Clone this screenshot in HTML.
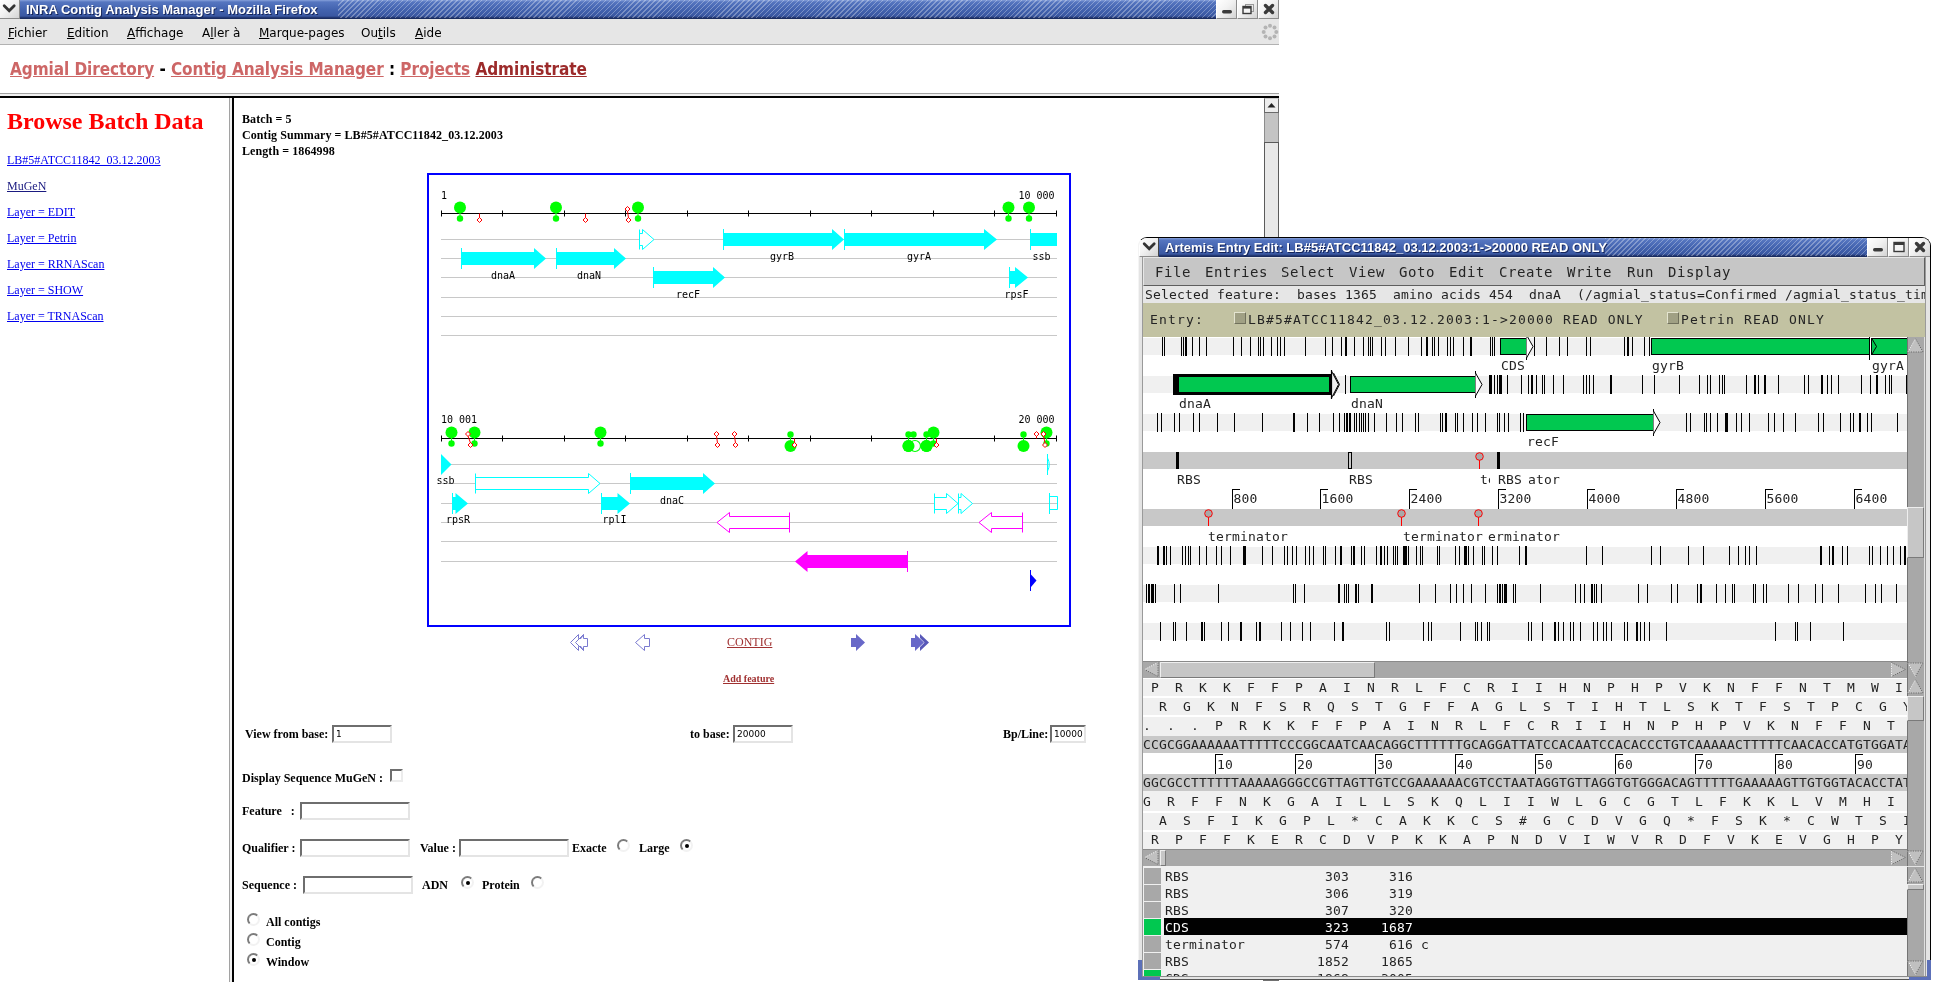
<!DOCTYPE html>
<html><head><meta charset="utf-8"><title>INRA Contig Analysis Manager - Mozilla Firefox</title>
<style>
html,body{margin:0;padding:0;background:#fff;}
body{width:1933px;height:982px;overflow:hidden;position:relative;font-family:"Liberation Sans","DejaVu Sans",sans-serif;}
div,span,a{box-sizing:border-box}
.a{position:absolute;white-space:nowrap}
#ff{position:absolute;left:0;top:0;width:1279px;height:982px;overflow:hidden;background:#fff;}
.tbar{position:absolute;height:19px;background:linear-gradient(#86a0da 0,#5676c0 2px,#4464b0 9px,#3a58a2 16px,#2c4486 17px,#1a2c60 18px);overflow:hidden}
.hatch{position:absolute;top:0;height:18px;right:0;background:repeating-linear-gradient(135deg,rgba(255,255,255,.30) 0,rgba(255,255,255,.30) 1px,rgba(255,255,255,0) 1px,rgba(255,255,255,0) 3.5px);}
.ttext{position:absolute;left:6px;top:2px;font:bold 13px "Liberation Sans","DejaVu Sans",sans-serif;color:#fff;text-shadow:1px 1px 0 #16265a;white-space:nowrap}
.wbtn{position:absolute;height:19px;background:linear-gradient(135deg,#ffffff 0,#f2f2f2 45%,#d4d4d4 100%);border-right:1px solid #8c8c8c;border-bottom:1px solid #8c8c8c;border-left:1px solid #fff}
#menubar{position:absolute;left:0;top:19px;width:1279px;height:26px;background:#e6e6e6;border-bottom:1px solid #b2b2b2;font:12px "DejaVu Sans","Liberation Sans",sans-serif;color:#000}
#menubar span{position:absolute;top:7px;white-space:nowrap}
#hdr{position:absolute;left:0;top:45px;width:1279px;height:48px;background:#fff}
#hdr .t{position:absolute;left:10px;top:14px;font:bold 17px "DejaVu Sans Condensed","DejaVu Sans","Liberation Sans",sans-serif;white-space:nowrap;color:#000;letter-spacing:-0.06px}
#hdr a{color:#cd6666;text-decoration:underline}
#hdr a.v{color:#9c2a2a}
.ser{font-family:"Liberation Serif","DejaVu Serif",serif}
.lnk{position:absolute;left:7px;font:12px "Liberation Serif","DejaVu Serif",serif;color:#0000ee;text-decoration:underline;white-space:nowrap}
.b12{position:absolute;font:bold 12px "Liberation Serif","DejaVu Serif",serif;color:#000;white-space:nowrap}
.inp{position:absolute;height:18px;background:#fff;border:2px solid;border-color:#6e6e6e #e4e4e4 #e4e4e4 #6e6e6e;font:9px "DejaVu Sans","Liberation Sans",sans-serif;padding:2px 0 0 2px;color:#000}
.rad{position:absolute;width:13px;height:13px;border-radius:50%;background:#fff;border:2px solid;border-color:#7c7c7c #f2f2f2 #f2f2f2 #7c7c7c;transform:rotate(0deg)}
.rad.on::after{content:"";position:absolute;left:2.5px;top:2.5px;width:4px;height:4px;border-radius:50%;background:#000}
.mono{font-family:"DejaVu Sans Mono","Liberation Mono",monospace}
</style></head><body><div id="root" style="position:absolute;left:0;top:0;width:1933px;height:982px;overflow:hidden;will-change:transform;opacity:0.999">
<div id="ff">
<div class="wbtn" style="left:0;top:0;width:20px;border-left:0"><svg class="a" style="left:2px;top:3px" width="15" height="12" viewBox="0 0 15 12"><polyline points="2.2,2.8 7.2,7.8 12.2,2.8" fill="none" stroke="#333" stroke-width="2.8" stroke-linecap="round" stroke-linejoin="miter"/></svg></div>
<div class="tbar" style="left:20px;top:0;width:1196px"><div class="hatch" style="left:318px"></div><div class="ttext">INRA Contig Analysis Manager - Mozilla Firefox</div></div>
<div class="wbtn" style="left:1216px;top:0;width:21px"><svg class="a" style="left:0;top:0" width="20" height="18"><rect x="5" y="10" width="10" height="3.4" rx="1.7" fill="#3a3a3a"/></svg></div>
<div class="wbtn" style="left:1237px;top:0;width:21px"><svg class="a" style="left:0;top:0" width="20" height="18"><rect x="7.5" y="4.5" width="8" height="7" fill="none" stroke="#9a9a9a"/><rect x="5" y="6.5" width="8" height="7" fill="#f4f4f4" stroke="#3a3a3a" stroke-width="1.4"/><rect x="5" y="6" width="8" height="2.6" fill="#3a3a3a"/></svg></div>
<div class="wbtn" style="left:1258px;top:0;width:21px"><svg class="a" style="left:0;top:0" width="20" height="18"><path d="M6.5 5.5 L13.5 12.5 M13.5 5.5 L6.5 12.5" stroke="#3a3a3a" stroke-width="3.4" stroke-linecap="round"/></svg></div>
<div id="menubar"><span style="left:8px"><u>F</u>ichier</span><span style="left:67px"><u>E</u>dition</span><span style="left:127px"><u>A</u>ffichage</span><span style="left:202px">A<u>l</u>ler à</span><span style="left:259px"><u>M</u>arque-pages</span><span style="left:361px">Ou<u>t</u>ils</span><span style="left:415px"><u>A</u>ide</span>
<svg class="a" style="left:1260px;top:3px" width="20" height="20" viewBox="0 0 20 20"><circle cx="16.3" cy="10.0" r="2" fill="#b4b4b4"/><circle cx="14.5" cy="14.5" r="2" fill="#b4b4b4"/><circle cx="10.0" cy="16.3" r="2" fill="#b4b4b4"/><circle cx="5.5" cy="14.5" r="2" fill="#b4b4b4"/><circle cx="3.7" cy="10.0" r="2" fill="#b4b4b4"/><circle cx="5.5" cy="5.5" r="2" fill="#b4b4b4"/><circle cx="10.0" cy="3.7" r="2" fill="#b4b4b4"/><circle cx="14.5" cy="5.5" r="2" fill="#b4b4b4"/></svg>
</div>
<div id="hdr"><div class="t"><a>Agmial Directory</a> - <a>Contig Analysis Manager</a> : <a>Projects</a> <a class="v">Administrate</a></div></div>
<div class="a" style="left:0;top:93px;width:1279px;height:1px;background:#a2a2a2"></div>
<div class="a" style="left:0;top:94px;width:1279px;height:2px;background:#f0f0f0"></div>
<div class="a" style="left:0;top:96px;width:1279px;height:2px;background:#000"></div>
<div class="a" style="left:229px;top:98px;width:1px;height:884px;background:#a2a2a2"></div>
<div class="a" style="left:230px;top:98px;width:2px;height:884px;background:#f0f0f0"></div>
<div class="a" style="left:232px;top:97px;width:2px;height:885px;background:#000"></div>
<div class="a ser" style="left:7px;top:108px;font:bold 24px 'Liberation Serif',serif;color:#ff0000;letter-spacing:-0.02px">Browse Batch Data</div>
<a class="lnk" style="top:153px;">LB#5#ATCC11842_03.12.2003</a>
<a class="lnk" style="top:179px;color:#1a1a80;">MuGeN</a>
<a class="lnk" style="top:205px;">Layer = EDIT</a>
<a class="lnk" style="top:231px;">Layer = Petrin</a>
<a class="lnk" style="top:257px;">Layer = RRNAScan</a>
<a class="lnk" style="top:283px;">Layer = SHOW</a>
<a class="lnk" style="top:309px;">Layer = TRNAScan</a>
<div class="b12" style="left:242px;top:112px;letter-spacing:0.08px">Batch = 5</div>
<div class="b12" style="left:242px;top:128px;letter-spacing:0.08px">Contig Summary = LB#5#ATCC11842_03.12.2003</div>
<div class="b12" style="left:242px;top:144px;letter-spacing:0.08px">Length = 1864998</div>
<div class="a" style="left:1264px;top:98px;width:15px;height:882px;background:#c4c4c4;border-left:1px solid #8c8c8c;border-right:1px solid #8c8c8c"></div>
<div class="a" style="left:1263px;top:980px;width:16px;height:1px;background:#707070"></div>
<div class="a" style="left:1264px;top:98px;width:15px;height:15px;background:#ececec;border:1px solid #6a6a6a;border-top-color:#ccc"><svg class="a" style="left:2px;top:3px" width="9" height="6"><path d="M0.5 5.5 L4.5 1 L8.5 5.5 Z" fill="#222"/></svg></div>
<div class="a" style="left:1264px;top:142px;width:15px;height:200px;background:#e8e8e8;border:1px solid #5a5a5a"></div>
<svg class="a" style="left:565px;top:630px" width="380" height="26" viewBox="565 630 380 26"><g fill="#fff" stroke="#7a7ad0" stroke-width="1"><path d="M570.5 642.5 L578.5 634.5 L578.5 638.5 L581 638.5 L583.5 634.5 L583.5 638.5 L587.5 638.5 L587.5 646.5 L583.5 646.5 L583.5 650.5 L581 646.5 L578.5 646.5 L578.5 650.5 Z"/><path d="M575.5 642.5 L583.5 634.5 M575.5 642.5 L583.5 650.5" /><path d="M635.5 642.5 L644.5 634.5 L644.5 638.5 L649.5 638.5 L649.5 646.5 L644.5 646.5 L644.5 650.5 Z"/></g><g fill="#6868c8"><path d="M851 638 L856 638 L856 634 L865 642.5 L856 651 L856 647 L851 647 Z"/><path d="M911 638 L915 638 L915 634 L924 642.5 L915 651 L915 647 L911 647 Z"/><path d="M920 634 L929 642.5 L920 651 L920 647 L924.5 642.5 L920 638 Z" fill="#5858b8"/></g></svg>
<a class="a ser" style="left:727px;top:635px;font:12px 'Liberation Serif',serif;color:#a03030;text-decoration:underline">CONTIG</a>
<a class="a ser" style="left:723px;top:673px;font:bold 10px 'Liberation Serif',serif;color:#a03030;text-decoration:underline">Add feature</a>
<div class="b12" style="left:245px;top:727px">View from base:</div>
<div class="inp" style="left:332px;top:725px;width:60px">1</div>
<div class="b12" style="left:690px;top:727px">to base:</div>
<div class="inp" style="left:733px;top:725px;width:60px">20000</div>
<div class="b12" style="left:1003px;top:727px">Bp/Line:</div>
<div class="inp" style="left:1050px;top:725px;width:36px">10000</div>
<div class="b12" style="left:242px;top:771px">Display Sequence MuGeN :</div>
<div class="a" style="left:390px;top:769px;width:13px;height:13px;background:#fff;border:2px solid;border-color:#6e6e6e #ececec #ececec #6e6e6e"></div>
<div class="b12" style="left:242px;top:804px">Feature&nbsp;&nbsp; :</div>
<div class="inp" style="left:300px;top:802px;width:110px"></div>
<div class="b12" style="left:242px;top:841px">Qualifier :</div>
<div class="inp" style="left:300px;top:839px;width:110px"></div>
<div class="b12" style="left:420px;top:841px">Value :</div>
<div class="inp" style="left:459px;top:839px;width:110px"></div>
<div class="b12" style="left:572px;top:841px">Exacte</div>
<div class="rad" style="left:617px;top:839px"></div>
<div class="b12" style="left:639px;top:841px">Large</div>
<div class="rad on" style="left:680px;top:839px"></div>
<div class="b12" style="left:242px;top:878px">Sequence :</div>
<div class="inp" style="left:303px;top:876px;width:110px"></div>
<div class="b12" style="left:422px;top:878px">ADN</div>
<div class="rad on" style="left:461px;top:876px"></div>
<div class="b12" style="left:482px;top:878px">Protein</div>
<div class="rad" style="left:531px;top:876px"></div>
<div class="rad" style="left:247px;top:913px"></div>
<div class="b12" style="left:266px;top:915px">All contigs</div>
<div class="rad" style="left:247px;top:933px"></div>
<div class="b12" style="left:266px;top:935px">Contig</div>
<div class="rad on" style="left:247px;top:953px"></div>
<div class="b12" style="left:266px;top:955px">Window</div>
<svg class="a" style="left:427px;top:173px" width="644" height="454" viewBox="427 173 644 454" shape-rendering="auto">
<rect x="428" y="174" width="642" height="452" fill="#fff" stroke="#0000ff" stroke-width="2"/>
<path d="M441 239.5 H1057" stroke="#c8c8c8" stroke-width="1"/>
<path d="M441 258.5 H1057" stroke="#c8c8c8" stroke-width="1"/>
<path d="M441 277.5 H1057" stroke="#c8c8c8" stroke-width="1"/>
<path d="M441 297.5 H1057" stroke="#c8c8c8" stroke-width="1"/>
<path d="M441 316.5 H1057" stroke="#c8c8c8" stroke-width="1"/>
<path d="M441 335.5 H1057" stroke="#c8c8c8" stroke-width="1"/>
<path d="M441 464.5 H1057" stroke="#c8c8c8" stroke-width="1"/>
<path d="M441 483.5 H1057" stroke="#c8c8c8" stroke-width="1"/>
<path d="M441 503.5 H1057" stroke="#c8c8c8" stroke-width="1"/>
<path d="M441 522.5 H1057" stroke="#c8c8c8" stroke-width="1"/>
<path d="M441 541.5 H1057" stroke="#c8c8c8" stroke-width="1"/>
<path d="M441 561.5 H1057" stroke="#c8c8c8" stroke-width="1"/>
<path d="M461.0 252.0 L534.0 252.0 L534.0 248.0 L546.0 258.5 L534.0 269.0 L534.0 265.0 L461.0 265.0 Z" fill="#00ffff"/><path d="M461.5 248.0 V269.0" stroke="#00ffff" stroke-width="1"/>
<path d="M556.0 252.0 L614.0 252.0 L614.0 248.0 L626.0 258.5 L614.0 269.0 L614.0 265.0 L556.0 265.0 Z" fill="#00ffff"/><path d="M556.5 248.0 V269.0" stroke="#00ffff" stroke-width="1"/>
<path d="M639.5 233.5 L642.5 233.5 L642.5 229.5 L654.0 239.5 L642.5 249.5 L642.5 245.5 L639.5 245.5 Z" fill="#fff" stroke="#00ffff" stroke-width="1"/><path d="M639.5 229.5 V249.5" stroke="#00ffff" stroke-width="1"/>
<path d="M723.0 233.0 L832.0 233.0 L832.0 229.0 L844.0 239.5 L832.0 250.0 L832.0 246.0 L723.0 246.0 Z" fill="#00ffff"/><path d="M723.5 229.0 V250.0" stroke="#00ffff" stroke-width="1"/>
<path d="M844.0 233.0 L984.0 233.0 L984.0 229.0 L997.0 239.5 L984.0 250.0 L984.0 246.0 L844.0 246.0 Z" fill="#00ffff"/><path d="M844.5 229.0 V250.0" stroke="#00ffff" stroke-width="1"/>
<path d="M1030.0 233.0 L1057.0 233.0 L1057.0 246.0 L1030.0 246.0 Z" fill="#00ffff"/><path d="M1030.5 229.0 V250.0" stroke="#00ffff" stroke-width="1"/>
<path d="M653.0 271.0 L713.0 271.0 L713.0 267.0 L725.0 277.5 L713.0 288.0 L713.0 284.0 L653.0 284.0 Z" fill="#00ffff"/><path d="M653.5 267.0 V288.0" stroke="#00ffff" stroke-width="1"/>
<path d="M1009.0 271.0 L1015.0 271.0 L1015.0 267.0 L1028.0 277.5 L1015.0 288.0 L1015.0 284.0 L1009.0 284.0 Z" fill="#00ffff"/><path d="M1009.5 267.0 V288.0" stroke="#00ffff" stroke-width="1"/>
<path d="M441 454 L451.5 464.5 L441 475 Z" fill="#00ffff"/>
<path d="M475.5 477.5 L588.5 477.5 L588.5 473.5 L600.0 483.5 L588.5 493.5 L588.5 489.5 L475.5 489.5 Z" fill="#fff" stroke="#00ffff" stroke-width="1"/><path d="M475.5 473.5 V493.5" stroke="#00ffff" stroke-width="1"/>
<path d="M630.0 477.0 L703.0 477.0 L703.0 473.0 L715.0 483.5 L703.0 494.0 L703.0 490.0 L630.0 490.0 Z" fill="#00ffff"/><path d="M630.5 473.0 V494.0" stroke="#00ffff" stroke-width="1"/>
<path d="M452.0 497.0 L455.5 497.0 L455.5 493.0 L468.0 503.5 L455.5 514.0 L455.5 510.0 L452.0 510.0 Z" fill="#00ffff"/><path d="M452.5 493.0 V514.0" stroke="#00ffff" stroke-width="1"/>
<path d="M601.0 497.0 L617.5 497.0 L617.5 493.0 L630.0 503.5 L617.5 514.0 L617.5 510.0 L601.0 510.0 Z" fill="#00ffff"/><path d="M601.5 493.0 V514.0" stroke="#00ffff" stroke-width="1"/>
<path d="M934.5 497.5 L946.5 497.5 L946.5 493.5 L958.0 503.5 L946.5 513.5 L946.5 509.5 L934.5 509.5 Z" fill="#fff" stroke="#00ffff" stroke-width="1"/><path d="M934.5 493.5 V513.5" stroke="#00ffff" stroke-width="1"/>
<path d="M958.5 497.5 L961.0 497.5 L961.0 493.5 L972.5 503.5 L961.0 513.5 L961.0 509.5 L958.5 509.5 Z" fill="#fff" stroke="#00ffff" stroke-width="1"/><path d="M958.5 493.5 V513.5" stroke="#00ffff" stroke-width="1"/>
<path d="M1047.5 454 V475 M1047.5 458 Q1051 464.5 1047.5 471" fill="none" stroke="#00ffff"/>
<path d="M1049.5 493 V514 M1049.5 496.5 H1057.5 V509.5 H1049.5" fill="none" stroke="#00ffff"/>
<path d="M789.5 516.5 L729.5 516.5 L729.5 512.5 L717.0 522.5 L729.5 532.5 L729.5 528.5 L789.5 528.5 Z" fill="#fff" stroke="#ff00ff" stroke-width="1"/><path d="M789.5 512.5 V532.5" stroke="#ff00ff" stroke-width="1"/>
<path d="M1022.5 516.5 L991.5 516.5 L991.5 512.5 L979.0 522.5 L991.5 532.5 L991.5 528.5 L1022.5 528.5 Z" fill="#fff" stroke="#ff00ff" stroke-width="1"/><path d="M1022.5 512.5 V532.5" stroke="#ff00ff" stroke-width="1"/>
<path d="M908.0 555.0 L807.5 555.0 L807.5 551.0 L795.0 561.5 L807.5 572.0 L807.5 568.0 L908.0 568.0 Z" fill="#ff00ff"/><path d="M907.5 551.0 V572.0" stroke="#ff00ff" stroke-width="1"/>
<path d="M1030.5 570 V591" stroke="#0000ff"/><path d="M1031 574.5 L1036.5 580.5 L1031 587 Z" fill="#0000ff"/>
<path d="M441 213.5 H1057" stroke="#000" stroke-width="1"/>
<path d="M441.5 210.5 V216.5" stroke="#000"/>
<path d="M502.5 210.5 V216.5" stroke="#000"/>
<path d="M564.5 210.5 V216.5" stroke="#000"/>
<path d="M625.5 210.5 V216.5" stroke="#000"/>
<path d="M687.5 210.5 V216.5" stroke="#000"/>
<path d="M748.5 210.5 V216.5" stroke="#000"/>
<path d="M810.5 210.5 V216.5" stroke="#000"/>
<path d="M871.5 210.5 V216.5" stroke="#000"/>
<path d="M933.5 210.5 V216.5" stroke="#000"/>
<path d="M994.5 210.5 V216.5" stroke="#000"/>
<path d="M1056.5 210.5 V216.5" stroke="#000"/>
<path d="M441 438.5 H1057" stroke="#000" stroke-width="1"/>
<path d="M441.5 435.5 V441.5" stroke="#000"/>
<path d="M502.5 435.5 V441.5" stroke="#000"/>
<path d="M564.5 435.5 V441.5" stroke="#000"/>
<path d="M625.5 435.5 V441.5" stroke="#000"/>
<path d="M687.5 435.5 V441.5" stroke="#000"/>
<path d="M748.5 435.5 V441.5" stroke="#000"/>
<path d="M810.5 435.5 V441.5" stroke="#000"/>
<path d="M871.5 435.5 V441.5" stroke="#000"/>
<path d="M933.5 435.5 V441.5" stroke="#000"/>
<path d="M994.5 435.5 V441.5" stroke="#000"/>
<path d="M1056.5 435.5 V441.5" stroke="#000"/>
<path d="M460.0 207.5 V218.5" stroke="#00ff00"/><circle cx="460.0" cy="207.5" r="6" fill="#00ff00"/><circle cx="460.0" cy="218.5" r="3.2" fill="#00ff00"/>
<path d="M556.0 207.5 V218.5" stroke="#00ff00"/><circle cx="556.0" cy="207.5" r="6" fill="#00ff00"/><circle cx="556.0" cy="218.5" r="3.2" fill="#00ff00"/>
<path d="M638.0 207.5 V218.5" stroke="#00ff00"/><circle cx="638.0" cy="207.5" r="6" fill="#00ff00"/><circle cx="638.0" cy="218.5" r="3.2" fill="#00ff00"/>
<path d="M1008.5 207.5 V218.5" stroke="#00ff00"/><circle cx="1008.5" cy="207.5" r="6" fill="#00ff00"/><circle cx="1008.5" cy="218.5" r="3.2" fill="#00ff00"/>
<path d="M1029.0 207.5 V218.5" stroke="#00ff00"/><circle cx="1029.0" cy="207.5" r="6" fill="#00ff00"/><circle cx="1029.0" cy="218.5" r="3.2" fill="#00ff00"/>
<path d="M479.5 213.5 V218.0" stroke="#ff0000"/><path d="M479.5 217.5 l2.5 2.5 l-2.5 2.5 l-2.5 -2.5 Z" fill="#fff" stroke="#ff0000" stroke-width="1"/>
<path d="M585.5 213.5 V218.0" stroke="#ff0000"/><path d="M585.5 217.5 l2.5 2.5 l-2.5 2.5 l-2.5 -2.5 Z" fill="#fff" stroke="#ff0000" stroke-width="1"/>
<path d="M627.5 211.0 L628.5 218.0" stroke="#ff0000"/><path d="M627.5 206.5 l2.5 2.5 l-2.5 2.5 l-2.5 -2.5 Z" fill="#fff" stroke="#ff0000" stroke-width="1"/><path d="M628.5 217.5 l2.5 2.5 l-2.5 2.5 l-2.5 -2.5 Z" fill="#fff" stroke="#ff0000" stroke-width="1"/>
<path d="M451.5 432.5 V443.5" stroke="#00ff00"/><circle cx="451.5" cy="432.5" r="6" fill="#00ff00"/><circle cx="451.5" cy="443.5" r="3.2" fill="#00ff00"/>
<path d="M474.5 432.5 V443.5" stroke="#00ff00"/><circle cx="474.5" cy="432.5" r="6" fill="#00ff00"/><circle cx="474.5" cy="443.5" r="3.2" fill="#00ff00"/>
<path d="M600.5 432.5 V443.5" stroke="#00ff00"/><circle cx="600.5" cy="432.5" r="6" fill="#00ff00"/><circle cx="600.5" cy="443.5" r="3.2" fill="#00ff00"/>
<path d="M468.0 436.0 L470.5 443.0" stroke="#ff0000"/><path d="M468.0 431.5 l2.5 2.5 l-2.5 2.5 l-2.5 -2.5 Z" fill="#fff" stroke="#ff0000" stroke-width="1"/><path d="M470.5 442.5 l2.5 2.5 l-2.5 2.5 l-2.5 -2.5 Z" fill="#fff" stroke="#ff0000" stroke-width="1"/>
<path d="M716.5 436.0 L717.5 443.0" stroke="#ff0000"/><path d="M716.5 431.5 l2.5 2.5 l-2.5 2.5 l-2.5 -2.5 Z" fill="#fff" stroke="#ff0000" stroke-width="1"/><path d="M717.5 442.5 l2.5 2.5 l-2.5 2.5 l-2.5 -2.5 Z" fill="#fff" stroke="#ff0000" stroke-width="1"/>
<path d="M734.5 436.0 L735.5 443.0" stroke="#ff0000"/><path d="M734.5 431.5 l2.5 2.5 l-2.5 2.5 l-2.5 -2.5 Z" fill="#fff" stroke="#ff0000" stroke-width="1"/><path d="M735.5 442.5 l2.5 2.5 l-2.5 2.5 l-2.5 -2.5 Z" fill="#fff" stroke="#ff0000" stroke-width="1"/>
<path d="M790.5 434.5 V445.5" stroke="#00ff00"/><circle cx="790.5" cy="446.0" r="6" fill="#00ff00"/><circle cx="790.5" cy="434.5" r="3.2" fill="#00ff00"/>
<path d="M794.5 438.5 V443.0" stroke="#ff0000"/><path d="M794.5 442.5 l2.5 2.5 l-2.5 2.5 l-2.5 -2.5 Z" fill="#fff" stroke="#ff0000" stroke-width="1"/>
<path d="M908.5 434.5 V445.5" stroke="#00ff00"/><circle cx="908.5" cy="446.0" r="6" fill="#00ff00"/><circle cx="908.5" cy="434.5" r="3.2" fill="#00ff00"/>
<circle cx="913.5" cy="434.5" r="3.2" fill="#00ff00"/>
<circle cx="915" cy="446" r="5.5" fill="#fff" stroke="#00ff00" stroke-width="1.2"/>
<circle cx="908.5" cy="446" r="6" fill="#00ff00"/>
<path d="M926.5 434.5 V445.5" stroke="#00ff00"/><circle cx="926.5" cy="446.0" r="6" fill="#00ff00"/><circle cx="926.5" cy="434.5" r="3.2" fill="#00ff00"/>
<path d="M933.5 432.5 V443.5" stroke="#00ff00"/><circle cx="933.5" cy="432.5" r="6" fill="#00ff00"/><circle cx="933.5" cy="443.5" r="3.2" fill="#00ff00"/>
<circle cx="926.5" cy="446" r="6" fill="#00ff00"/>
<path d="M936.5 438.5 V443.0" stroke="#ff0000"/><path d="M936.5 442.5 l2.5 2.5 l-2.5 2.5 l-2.5 -2.5 Z" fill="#fff" stroke="#ff0000" stroke-width="1"/>
<path d="M1023.5 434.5 V445.5" stroke="#00ff00"/><circle cx="1023.5" cy="446.0" r="6" fill="#00ff00"/><circle cx="1023.5" cy="434.5" r="3.2" fill="#00ff00"/>
<path d="M1046.5 432.5 V443.5" stroke="#00ff00"/><circle cx="1046.5" cy="432.5" r="6" fill="#00ff00"/><circle cx="1046.5" cy="443.5" r="3.2" fill="#00ff00"/>
<path d="M1036.5 436.0 V438.5" stroke="#ff0000"/><path d="M1036.5 431.5 l2.5 2.5 l-2.5 2.5 l-2.5 -2.5 Z" fill="#fff" stroke="#ff0000" stroke-width="1"/>
<path d="M1043.5 436.0 L1045.0 443.0" stroke="#ff0000"/><path d="M1043.5 431.5 l2.5 2.5 l-2.5 2.5 l-2.5 -2.5 Z" fill="#fff" stroke="#ff0000" stroke-width="1"/><path d="M1045.0 442.5 l2.5 2.5 l-2.5 2.5 l-2.5 -2.5 Z" fill="#fff" stroke="#ff0000" stroke-width="1"/>
<g font-family="'DejaVu Sans Mono','Liberation Mono',monospace" font-size="10" fill="#000">
<text x="441.0" y="199.0">1</text>
<text x="1018.5" y="199.0">10 000</text>
<text x="441.0" y="423.0">10 001</text>
<text x="1018.5" y="423.0">20 000</text>
<text x="491.0" y="279.0">dnaA</text>
<text x="577.0" y="279.0">dnaN</text>
<text x="770.0" y="260.0">gyrB</text>
<text x="907.0" y="260.0">gyrA</text>
<text x="1032.5" y="260.0">ssb</text>
<text x="676.0" y="298.0">recF</text>
<text x="1004.5" y="298.0">rpsF</text>
<text x="436.5" y="484.0">ssb</text>
<text x="446.0" y="523.0">rpsR</text>
<text x="602.5" y="523.0">rplI</text>
<text x="660.0" y="504.0">dnaC</text>
</g>
</svg>
</div>
<div style="color:#242424">
<div class="a" style="left:1138px;top:237px;width:793px;height:743px;background:#e4e4e4;border-radius:9px 9px 0 0;border:1px solid #000;border-left-color:#f4f4f4;border-bottom-color:#555;overflow:hidden"></div>
<div class="wbtn" style="left:1139px;top:238px;width:20px;border-radius:8px 0 0 0;border-right-color:#444"><svg class="a" style="left:2px;top:3px" width="15" height="12" viewBox="0 0 15 12"><polyline points="2.2,2.8 7.2,7.8 12.2,2.8" fill="none" stroke="#333" stroke-width="2.8" stroke-linecap="round"/></svg></div>
<div class="tbar" style="left:1159px;top:238px;width:708px"><div class="hatch" style="left:446px"></div><div class="ttext">Artemis Entry Edit: LB#5#ATCC11842_03.12.2003:1-&gt;20000 READ ONLY</div></div>
<div class="wbtn" style="left:1867px;top:238px;width:21px"><svg class="a" style="left:0;top:0" width="20" height="18"><rect x="5" y="10" width="10" height="3.4" rx="1.7" fill="#3a3a3a"/></svg></div>
<div class="wbtn" style="left:1888px;top:238px;width:21px"><svg class="a" style="left:0;top:0" width="20" height="18"><rect x="5" y="4.5" width="10" height="9" fill="#f4f4f4" stroke="#3a3a3a" stroke-width="1.4"/><rect x="5" y="4" width="10" height="3" fill="#3a3a3a"/></svg></div>
<div class="wbtn" style="left:1909px;top:238px;width:21px;border-radius:0 8px 0 0;border-right:0"><svg class="a" style="left:0;top:0" width="20" height="18"><path d="M6.5 5.5 L13.5 12.5 M13.5 5.5 L6.5 12.5" stroke="#3a3a3a" stroke-width="3.4" stroke-linecap="round"/></svg></div>
<div class="a" style="left:1142px;top:257px;width:1px;height:720px;background:#9a9a9a"></div>
<div class="a" style="left:1925px;top:257px;width:1px;height:720px;background:#9a9a9a"></div>
<div class="a" style="left:1143px;top:257px;width:782px;height:29px;background:#c6c6c6;border-top:1px solid #e6e6e6;border-left:1px solid #e6e6e6;border-bottom:1px solid #5e5e5e;border-right:1px solid #5e5e5e"></div>
<div class="a mono" style="left:1155px;top:264px;font-size:14px;letter-spacing:0.57px;line-height:17px">File</div>
<div class="a mono" style="left:1205px;top:264px;font-size:14px;letter-spacing:0.57px;line-height:17px">Entries</div>
<div class="a mono" style="left:1281px;top:264px;font-size:14px;letter-spacing:0.57px;line-height:17px">Select</div>
<div class="a mono" style="left:1349px;top:264px;font-size:14px;letter-spacing:0.57px;line-height:17px">View</div>
<div class="a mono" style="left:1399px;top:264px;font-size:14px;letter-spacing:0.57px;line-height:17px">Goto</div>
<div class="a mono" style="left:1449px;top:264px;font-size:14px;letter-spacing:0.57px;line-height:17px">Edit</div>
<div class="a mono" style="left:1499px;top:264px;font-size:14px;letter-spacing:0.57px;line-height:17px">Create</div>
<div class="a mono" style="left:1567px;top:264px;font-size:14px;letter-spacing:0.57px;line-height:17px">Write</div>
<div class="a mono" style="left:1627px;top:264px;font-size:14px;letter-spacing:0.57px;line-height:17px">Run</div>
<div class="a mono" style="left:1668px;top:264px;font-size:14px;letter-spacing:0.57px;line-height:17px">Display</div>
<div class="a mono" style="left:1143px;top:286px;width:782px;height:17px;background:#e6e6e6;font-size:13px;letter-spacing:0.173px;line-height:18px;padding-left:2px;white-space:pre;overflow:hidden">Selected feature:  bases 1365  amino acids 454  dnaA  (/agmial_status=Confirmed /agmial_status_time=2004</div>
<div class="a" style="left:1143px;top:303px;width:782px;height:34px;background:#c2c2a2"></div>
<div class="a mono" style="left:1150px;top:311px;font-size:13px;letter-spacing:1.17px;line-height:17px">Entry:</div>
<div class="a" style="left:1234px;top:312px;width:12px;height:12px;background:#a0a084;border:1px solid;border-color:#e4e4d0 #70705c #70705c #e4e4d0"></div>
<div class="a mono" style="left:1248px;top:311px;font-size:13px;letter-spacing:1.17px;line-height:17px">LB#5#ATCC11842_03.12.2003:1-&gt;20000 READ ONLY</div>
<div class="a" style="left:1667px;top:312px;width:12px;height:12px;background:#a0a084;border:1px solid;border-color:#e4e4d0 #70705c #70705c #e4e4d0"></div>
<div class="a mono" style="left:1681px;top:311px;font-size:13px;letter-spacing:1.17px;line-height:17px">Petrin READ ONLY</div>
<svg class="a" style="left:1143px;top:337px" width="764" height="324" viewBox="1143 337 764 324" shape-rendering="crispEdges"><rect x="1143" y="337" width="764" height="324" fill="#fff"/><rect x="1143" y="338" width="764" height="17" fill="#f0f0f0"/><rect x="1143" y="376" width="764" height="17" fill="#f0f0f0"/><rect x="1143" y="414" width="764" height="17" fill="#f0f0f0"/><rect x="1143" y="547" width="764" height="17" fill="#f0f0f0"/><rect x="1143" y="585" width="764" height="17" fill="#f0f0f0"/><rect x="1143" y="623" width="764" height="17" fill="#f0f0f0"/><rect x="1143" y="452" width="764" height="17" fill="#c8c8c8"/><rect x="1143" y="509" width="764" height="17" fill="#c8c8c8"/><g fill="#000"><rect x="1162" y="337" width="1" height="19"/><rect x="1164" y="337" width="1" height="19"/><rect x="1181" y="337" width="1" height="19"/><rect x="1183" y="337" width="1" height="19"/><rect x="1185" y="337" width="2" height="19"/><rect x="1192" y="337" width="1" height="19"/><rect x="1199" y="337" width="1" height="19"/><rect x="1206" y="337" width="1" height="19"/><rect x="1233" y="337" width="1" height="19"/><rect x="1241" y="337" width="1" height="19"/><rect x="1250" y="337" width="1" height="19"/><rect x="1258" y="337" width="1" height="19"/><rect x="1260" y="337" width="1" height="19"/><rect x="1263" y="337" width="1" height="19"/><rect x="1271" y="337" width="1" height="19"/><rect x="1277" y="337" width="1" height="19"/><rect x="1280" y="337" width="1" height="19"/><rect x="1284" y="337" width="1" height="19"/><rect x="1305" y="337" width="1" height="19"/><rect x="1325" y="337" width="1" height="19"/><rect x="1332" y="337" width="1" height="19"/><rect x="1341" y="337" width="1" height="19"/><rect x="1345" y="337" width="2" height="19"/><rect x="1354" y="337" width="1" height="19"/><rect x="1363" y="337" width="1" height="19"/><rect x="1368" y="337" width="1" height="19"/><rect x="1370" y="337" width="1" height="19"/><rect x="1372" y="337" width="1" height="19"/><rect x="1381" y="337" width="1" height="19"/><rect x="1385" y="337" width="1" height="19"/><rect x="1395" y="337" width="1" height="19"/><rect x="1408" y="337" width="1" height="19"/><rect x="1421" y="337" width="1" height="19"/><rect x="1426" y="337" width="2" height="19"/><rect x="1432" y="337" width="1" height="19"/><rect x="1434" y="337" width="1" height="19"/><rect x="1438" y="337" width="1" height="19"/><rect x="1447" y="337" width="1" height="19"/><rect x="1450" y="337" width="1" height="19"/><rect x="1453" y="337" width="1" height="19"/><rect x="1463" y="337" width="1" height="19"/><rect x="1470" y="337" width="2" height="19"/><rect x="1490" y="337" width="1" height="19"/><rect x="1492" y="337" width="1" height="19"/><rect x="1494" y="337" width="1" height="19"/><rect x="1534" y="337" width="1" height="19"/><rect x="1546" y="337" width="1" height="19"/><rect x="1559" y="337" width="1" height="19"/><rect x="1567" y="337" width="1" height="19"/><rect x="1586" y="337" width="1" height="19"/><rect x="1590" y="337" width="1" height="19"/><rect x="1624" y="337" width="1" height="19"/><rect x="1627" y="337" width="2" height="19"/><rect x="1632" y="337" width="1" height="19"/><rect x="1644" y="337" width="1" height="19"/><rect x="1649" y="337" width="1" height="19"/><rect x="1345" y="375" width="1" height="19"/><rect x="1489" y="375" width="3" height="19"/><rect x="1494" y="375" width="1" height="19"/><rect x="1497" y="375" width="1" height="19"/><rect x="1499" y="375" width="3" height="19"/><rect x="1507" y="375" width="1" height="19"/><rect x="1521" y="375" width="1" height="19"/><rect x="1528" y="375" width="1" height="19"/><rect x="1531" y="375" width="1" height="19"/><rect x="1532" y="375" width="1" height="19"/><rect x="1536" y="375" width="1" height="19"/><rect x="1542" y="375" width="1" height="19"/><rect x="1544" y="375" width="1" height="19"/><rect x="1553" y="375" width="1" height="19"/><rect x="1563" y="375" width="1" height="19"/><rect x="1583" y="375" width="1" height="19"/><rect x="1586" y="375" width="1" height="19"/><rect x="1589" y="375" width="1" height="19"/><rect x="1593" y="375" width="1" height="19"/><rect x="1610" y="375" width="2" height="19"/><rect x="1642" y="375" width="1" height="19"/><rect x="1654" y="375" width="1" height="19"/><rect x="1679" y="375" width="1" height="19"/><rect x="1699" y="375" width="1" height="19"/><rect x="1707" y="375" width="1" height="19"/><rect x="1710" y="375" width="1" height="19"/><rect x="1719" y="375" width="1" height="19"/><rect x="1722" y="375" width="1" height="19"/><rect x="1724" y="375" width="1" height="19"/><rect x="1746" y="375" width="1" height="19"/><rect x="1754" y="375" width="2" height="19"/><rect x="1758" y="375" width="1" height="19"/><rect x="1764" y="375" width="2" height="19"/><rect x="1778" y="375" width="1" height="19"/><rect x="1804" y="375" width="1" height="19"/><rect x="1808" y="375" width="1" height="19"/><rect x="1821" y="375" width="2" height="19"/><rect x="1827" y="375" width="1" height="19"/><rect x="1831" y="375" width="1" height="19"/><rect x="1838" y="375" width="1" height="19"/><rect x="1861" y="375" width="1" height="19"/><rect x="1870" y="375" width="1" height="19"/><rect x="1876" y="375" width="2" height="19"/><rect x="1885" y="375" width="1" height="19"/><rect x="1889" y="375" width="1" height="19"/><rect x="1891" y="375" width="1" height="19"/><rect x="1906" y="375" width="2" height="19"/><rect x="1157" y="413" width="1" height="19"/><rect x="1161" y="413" width="1" height="19"/><rect x="1174" y="413" width="1" height="19"/><rect x="1179" y="413" width="1" height="19"/><rect x="1193" y="413" width="1" height="19"/><rect x="1199" y="413" width="1" height="19"/><rect x="1217" y="413" width="1" height="19"/><rect x="1234" y="413" width="1" height="19"/><rect x="1262" y="413" width="1" height="19"/><rect x="1293" y="413" width="2" height="19"/><rect x="1307" y="413" width="1" height="19"/><rect x="1319" y="413" width="1" height="19"/><rect x="1333" y="413" width="1" height="19"/><rect x="1339" y="413" width="1" height="19"/><rect x="1344" y="413" width="1" height="19"/><rect x="1346" y="413" width="1" height="19"/><rect x="1347" y="413" width="1" height="19"/><rect x="1349" y="413" width="1" height="19"/><rect x="1350" y="413" width="1" height="19"/><rect x="1354" y="413" width="1" height="19"/><rect x="1356" y="413" width="1" height="19"/><rect x="1359" y="413" width="1" height="19"/><rect x="1361" y="413" width="1" height="19"/><rect x="1363" y="413" width="1" height="19"/><rect x="1365" y="413" width="1" height="19"/><rect x="1368" y="413" width="1" height="19"/><rect x="1374" y="413" width="1" height="19"/><rect x="1386" y="413" width="1" height="19"/><rect x="1396" y="413" width="1" height="19"/><rect x="1402" y="413" width="1" height="19"/><rect x="1415" y="413" width="1" height="19"/><rect x="1418" y="413" width="1" height="19"/><rect x="1440" y="413" width="1" height="19"/><rect x="1442" y="413" width="1" height="19"/><rect x="1445" y="413" width="2" height="19"/><rect x="1455" y="413" width="1" height="19"/><rect x="1457" y="413" width="1" height="19"/><rect x="1463" y="413" width="1" height="19"/><rect x="1472" y="413" width="1" height="19"/><rect x="1477" y="413" width="1" height="19"/><rect x="1485" y="413" width="1" height="19"/><rect x="1497" y="413" width="1" height="19"/><rect x="1499" y="413" width="1" height="19"/><rect x="1504" y="413" width="1" height="19"/><rect x="1508" y="413" width="1" height="19"/><rect x="1520" y="413" width="1" height="19"/><rect x="1523" y="413" width="1" height="19"/><rect x="1686" y="413" width="1" height="19"/><rect x="1690" y="413" width="1" height="19"/><rect x="1704" y="413" width="1" height="19"/><rect x="1706" y="413" width="1" height="19"/><rect x="1710" y="413" width="1" height="19"/><rect x="1717" y="413" width="1" height="19"/><rect x="1725" y="413" width="3" height="19"/><rect x="1736" y="413" width="1" height="19"/><rect x="1741" y="413" width="1" height="19"/><rect x="1749" y="413" width="1" height="19"/><rect x="1768" y="413" width="1" height="19"/><rect x="1774" y="413" width="1" height="19"/><rect x="1783" y="413" width="1" height="19"/><rect x="1795" y="413" width="1" height="19"/><rect x="1818" y="413" width="1" height="19"/><rect x="1823" y="413" width="1" height="19"/><rect x="1840" y="413" width="1" height="19"/><rect x="1850" y="413" width="1" height="19"/><rect x="1853" y="413" width="1" height="19"/><rect x="1859" y="413" width="2" height="19"/><rect x="1867" y="413" width="1" height="19"/><rect x="1871" y="413" width="1" height="19"/><rect x="1897" y="413" width="1" height="19"/><rect x="1157" y="546" width="2" height="19"/><rect x="1163" y="546" width="2" height="19"/><rect x="1166" y="546" width="1" height="19"/><rect x="1170" y="546" width="1" height="19"/><rect x="1182" y="546" width="1" height="19"/><rect x="1185" y="546" width="1" height="19"/><rect x="1188" y="546" width="1" height="19"/><rect x="1190" y="546" width="1" height="19"/><rect x="1199" y="546" width="1" height="19"/><rect x="1206" y="546" width="1" height="19"/><rect x="1216" y="546" width="1" height="19"/><rect x="1221" y="546" width="1" height="19"/><rect x="1230" y="546" width="1" height="19"/><rect x="1243" y="546" width="3" height="19"/><rect x="1262" y="546" width="1" height="19"/><rect x="1272" y="546" width="1" height="19"/><rect x="1284" y="546" width="1" height="19"/><rect x="1287" y="546" width="1" height="19"/><rect x="1292" y="546" width="1" height="19"/><rect x="1296" y="546" width="1" height="19"/><rect x="1305" y="546" width="1" height="19"/><rect x="1309" y="546" width="1" height="19"/><rect x="1313" y="546" width="1" height="19"/><rect x="1323" y="546" width="1" height="19"/><rect x="1325" y="546" width="1" height="19"/><rect x="1335" y="546" width="1" height="19"/><rect x="1340" y="546" width="2" height="19"/><rect x="1351" y="546" width="1" height="19"/><rect x="1353" y="546" width="2" height="19"/><rect x="1361" y="546" width="1" height="19"/><rect x="1364" y="546" width="1" height="19"/><rect x="1376" y="546" width="1" height="19"/><rect x="1380" y="546" width="2" height="19"/><rect x="1384" y="546" width="1" height="19"/><rect x="1387" y="546" width="1" height="19"/><rect x="1393" y="546" width="1" height="19"/><rect x="1395" y="546" width="1" height="19"/><rect x="1397" y="546" width="1" height="19"/><rect x="1403" y="546" width="4" height="19"/><rect x="1408" y="546" width="1" height="19"/><rect x="1416" y="546" width="1" height="19"/><rect x="1420" y="546" width="1" height="19"/><rect x="1422" y="546" width="1" height="19"/><rect x="1437" y="546" width="1" height="19"/><rect x="1439" y="546" width="1" height="19"/><rect x="1455" y="546" width="1" height="19"/><rect x="1459" y="546" width="1" height="19"/><rect x="1464" y="546" width="3" height="19"/><rect x="1468" y="546" width="1" height="19"/><rect x="1473" y="546" width="1" height="19"/><rect x="1482" y="546" width="1" height="19"/><rect x="1484" y="546" width="1" height="19"/><rect x="1492" y="546" width="1" height="19"/><rect x="1497" y="546" width="1" height="19"/><rect x="1519" y="546" width="1" height="19"/><rect x="1525" y="546" width="2" height="19"/><rect x="1586" y="546" width="1" height="19"/><rect x="1602" y="546" width="1" height="19"/><rect x="1651" y="546" width="1" height="19"/><rect x="1660" y="546" width="1" height="19"/><rect x="1688" y="546" width="1" height="19"/><rect x="1703" y="546" width="1" height="19"/><rect x="1729" y="546" width="1" height="19"/><rect x="1738" y="546" width="1" height="19"/><rect x="1745" y="546" width="1" height="19"/><rect x="1749" y="546" width="1" height="19"/><rect x="1756" y="546" width="1" height="19"/><rect x="1820" y="546" width="2" height="19"/><rect x="1829" y="546" width="1" height="19"/><rect x="1832" y="546" width="2" height="19"/><rect x="1842" y="546" width="1" height="19"/><rect x="1847" y="546" width="1" height="19"/><rect x="1869" y="546" width="1" height="19"/><rect x="1872" y="546" width="1" height="19"/><rect x="1880" y="546" width="1" height="19"/><rect x="1887" y="546" width="1" height="19"/><rect x="1893" y="546" width="1" height="19"/><rect x="1900" y="546" width="1" height="19"/><rect x="1904" y="546" width="2" height="19"/><rect x="1146" y="584" width="1" height="19"/><rect x="1148" y="584" width="1" height="19"/><rect x="1149" y="584" width="1" height="19"/><rect x="1151" y="584" width="1" height="19"/><rect x="1152" y="584" width="1" height="19"/><rect x="1153" y="584" width="1" height="19"/><rect x="1155" y="584" width="1" height="19"/><rect x="1174" y="584" width="1" height="19"/><rect x="1180" y="584" width="1" height="19"/><rect x="1218" y="584" width="1" height="19"/><rect x="1293" y="584" width="1" height="19"/><rect x="1295" y="584" width="1" height="19"/><rect x="1304" y="584" width="1" height="19"/><rect x="1338" y="584" width="2" height="19"/><rect x="1344" y="584" width="1" height="19"/><rect x="1346" y="584" width="1" height="19"/><rect x="1348" y="584" width="1" height="19"/><rect x="1355" y="584" width="2" height="19"/><rect x="1358" y="584" width="1" height="19"/><rect x="1371" y="584" width="2" height="19"/><rect x="1419" y="584" width="1" height="19"/><rect x="1435" y="584" width="1" height="19"/><rect x="1450" y="584" width="1" height="19"/><rect x="1456" y="584" width="1" height="19"/><rect x="1463" y="584" width="1" height="19"/><rect x="1471" y="584" width="1" height="19"/><rect x="1485" y="584" width="1" height="19"/><rect x="1497" y="584" width="1" height="19"/><rect x="1499" y="584" width="2" height="19"/><rect x="1502" y="584" width="1" height="19"/><rect x="1504" y="584" width="3" height="19"/><rect x="1513" y="584" width="1" height="19"/><rect x="1515" y="584" width="1" height="19"/><rect x="1540" y="584" width="1" height="19"/><rect x="1575" y="584" width="1" height="19"/><rect x="1580" y="584" width="1" height="19"/><rect x="1584" y="584" width="1" height="19"/><rect x="1591" y="584" width="2" height="19"/><rect x="1594" y="584" width="1" height="19"/><rect x="1596" y="584" width="1" height="19"/><rect x="1601" y="584" width="1" height="19"/><rect x="1638" y="584" width="1" height="19"/><rect x="1647" y="584" width="1" height="19"/><rect x="1671" y="584" width="1" height="19"/><rect x="1677" y="584" width="1" height="19"/><rect x="1697" y="584" width="1" height="19"/><rect x="1700" y="584" width="2" height="19"/><rect x="1716" y="584" width="1" height="19"/><rect x="1725" y="584" width="1" height="19"/><rect x="1732" y="584" width="1" height="19"/><rect x="1734" y="584" width="1" height="19"/><rect x="1753" y="584" width="1" height="19"/><rect x="1755" y="584" width="1" height="19"/><rect x="1763" y="584" width="1" height="19"/><rect x="1766" y="584" width="1" height="19"/><rect x="1788" y="584" width="1" height="19"/><rect x="1798" y="584" width="1" height="19"/><rect x="1815" y="584" width="1" height="19"/><rect x="1822" y="584" width="1" height="19"/><rect x="1838" y="584" width="1" height="19"/><rect x="1865" y="584" width="1" height="19"/><rect x="1875" y="584" width="1" height="19"/><rect x="1881" y="584" width="1" height="19"/><rect x="1896" y="584" width="1" height="19"/><rect x="1160" y="622" width="1" height="19"/><rect x="1173" y="622" width="1" height="19"/><rect x="1175" y="622" width="1" height="19"/><rect x="1186" y="622" width="1" height="19"/><rect x="1201" y="622" width="2" height="19"/><rect x="1204" y="622" width="1" height="19"/><rect x="1221" y="622" width="1" height="19"/><rect x="1228" y="622" width="1" height="19"/><rect x="1240" y="622" width="2" height="19"/><rect x="1256" y="622" width="1" height="19"/><rect x="1259" y="622" width="2" height="19"/><rect x="1281" y="622" width="1" height="19"/><rect x="1290" y="622" width="1" height="19"/><rect x="1302" y="622" width="1" height="19"/><rect x="1310" y="622" width="1" height="19"/><rect x="1334" y="622" width="1" height="19"/><rect x="1342" y="622" width="2" height="19"/><rect x="1386" y="622" width="1" height="19"/><rect x="1389" y="622" width="1" height="19"/><rect x="1423" y="622" width="1" height="19"/><rect x="1428" y="622" width="1" height="19"/><rect x="1431" y="622" width="1" height="19"/><rect x="1460" y="622" width="1" height="19"/><rect x="1475" y="622" width="1" height="19"/><rect x="1477" y="622" width="1" height="19"/><rect x="1481" y="622" width="1" height="19"/><rect x="1487" y="622" width="1" height="19"/><rect x="1489" y="622" width="1" height="19"/><rect x="1528" y="622" width="1" height="19"/><rect x="1531" y="622" width="1" height="19"/><rect x="1542" y="622" width="1" height="19"/><rect x="1554" y="622" width="2" height="19"/><rect x="1558" y="622" width="1" height="19"/><rect x="1563" y="622" width="1" height="19"/><rect x="1570" y="622" width="1" height="19"/><rect x="1573" y="622" width="1" height="19"/><rect x="1580" y="622" width="1" height="19"/><rect x="1593" y="622" width="1" height="19"/><rect x="1597" y="622" width="1" height="19"/><rect x="1603" y="622" width="1" height="19"/><rect x="1606" y="622" width="1" height="19"/><rect x="1611" y="622" width="1" height="19"/><rect x="1624" y="622" width="1" height="19"/><rect x="1627" y="622" width="1" height="19"/><rect x="1636" y="622" width="2" height="19"/><rect x="1640" y="622" width="1" height="19"/><rect x="1644" y="622" width="1" height="19"/><rect x="1649" y="622" width="1" height="19"/><rect x="1666" y="622" width="1" height="19"/><rect x="1775" y="622" width="1" height="19"/><rect x="1795" y="622" width="1" height="19"/><rect x="1797" y="622" width="1" height="19"/><rect x="1810" y="622" width="1" height="19"/><rect x="1843" y="622" width="1" height="19"/></g><rect x="1173" y="374" width="159" height="21" fill="#000"/><rect x="1179" y="377" width="150" height="15" fill="#00c850"/><g shape-rendering="auto"><path d="M1331.5 370.0 V399.0" stroke="#000" stroke-width="1.2"/><path d="M1331.5 371.0 L1338.5 384.5 L1331.5 398.0" fill="none" stroke="#000" stroke-width="1"/><path d="M1333.5 373.0 L1339.5 384.5 L1333.5 396.0" fill="none" stroke="#000" stroke-width="1"/></g><rect x="1350.5" y="376.5" width="125" height="16" fill="#00c850" stroke="#000" stroke-width="1"/><g shape-rendering="auto"><path d="M1475.5 371.0 V398.0" stroke="#000" stroke-width="1"/><path d="M1475.5 373.0 L1482.0 384.5 L1475.5 396.0" fill="#fff" stroke="#000" stroke-width="1"/></g><rect x="1500.5" y="338.5" width="26" height="16" fill="#00c850" stroke="#000" stroke-width="1"/><g shape-rendering="auto"><path d="M1526.5 333.0 V360.0" stroke="#000" stroke-width="1"/><path d="M1526.5 335.0 L1533.0 346.5 L1526.5 358.0" fill="#fff" stroke="#000" stroke-width="1"/></g><rect x="1651.5" y="338.5" width="218" height="16" fill="#00c850" stroke="#000" stroke-width="1"/><rect x="1870.5" y="338.5" width="41" height="16" fill="#00c850" stroke="#000" stroke-width="1"/><g shape-rendering="auto"><path d="M1869.5 336 V360" stroke="#000"/><path d="M1870.5 337 V356" stroke="#fff"/><path d="M1871.5 338 L1876.5 346.5 L1871.5 355 Z" fill="#00c850" stroke="#000"/></g><rect x="1526.5" y="414.5" width="127" height="16" fill="#00c850" stroke="#000" stroke-width="1"/><g shape-rendering="auto"><path d="M1653.5 409.0 V436.0" stroke="#000" stroke-width="1"/><path d="M1653.5 411.0 L1660.0 422.5 L1653.5 434.0" fill="#fff" stroke="#000" stroke-width="1"/></g><rect x="1176" y="452" width="3" height="17" fill="#000"/><rect x="1348.5" y="452.5" width="3" height="16" fill="#c8c8c8" stroke="#000"/><rect x="1497" y="452" width="3" height="17" fill="#000"/><g shape-rendering="auto"><path d="M1479.5 456.0 V469.0" stroke="#ff0000"/><circle cx="1479.5" cy="456.5" r="3.8" fill="#a8a8a8" stroke="#ff0000"/></g><g shape-rendering="auto"><path d="M1208.5 513.0 V526.0" stroke="#ff0000"/><circle cx="1208.5" cy="513.5" r="3.8" fill="#a8a8a8" stroke="#ff0000"/></g><g shape-rendering="auto"><path d="M1401.5 513.0 V526.0" stroke="#ff0000"/><circle cx="1401.5" cy="513.5" r="3.8" fill="#a8a8a8" stroke="#ff0000"/></g><g shape-rendering="auto"><path d="M1478.5 513.0 V526.0" stroke="#ff0000"/><circle cx="1478.5" cy="513.5" r="3.8" fill="#a8a8a8" stroke="#ff0000"/></g><path d="M1232.5 509 V489.5 H1240.0" fill="none" stroke="#000"/><path d="M1320.5 509 V489.5 H1328.0" fill="none" stroke="#000"/><path d="M1409.5 509 V489.5 H1417.0" fill="none" stroke="#000"/><path d="M1498.5 509 V489.5 H1506.0" fill="none" stroke="#000"/><path d="M1587.5 509 V489.5 H1595.0" fill="none" stroke="#000"/><path d="M1676.5 509 V489.5 H1684.0" fill="none" stroke="#000"/><path d="M1765.5 509 V489.5 H1773.0" fill="none" stroke="#000"/><path d="M1854.5 509 V489.5 H1862.0" fill="none" stroke="#000"/><g shape-rendering="auto" font-family="'DejaVu Sans Mono','Liberation Mono',monospace" font-size="13" letter-spacing="0.17" fill="#242424"><text x="1233.5" y="502.5">800</text><text x="1321.5" y="502.5">1600</text><text x="1410.5" y="502.5">2400</text><text x="1499.5" y="502.5">3200</text><text x="1588.5" y="502.5">4000</text><text x="1677.5" y="502.5">4800</text><text x="1766.5" y="502.5">5600</text><text x="1855.5" y="502.5">6400</text><text x="1501.0" y="369.5">CDS</text><text x="1652.0" y="369.5">gyrB</text><text x="1872.0" y="369.5">gyrA</text><text x="1179.0" y="407.5">dnaA</text><text x="1351.0" y="407.5">dnaN</text><text x="1527.0" y="445.5">recF</text><text x="1177.0" y="483.5">RBS</text><text x="1349.0" y="483.5">RBS</text><text x="1480.0" y="483.5">terminator</text><rect x="1490" y="470" width="39" height="18" fill="#fff"/><text x="1498.0" y="483.5">RBS</text><text x="1480.0" y="540.5">terminator</text><rect x="1401" y="527" width="86" height="18" fill="#fff"/><text x="1403.0" y="540.5">terminator</text><text x="1208.0" y="540.5">terminator</text></g></svg>
<div class="a" style="left:1143px;top:661px;width:764px;height:17px;background:#a8a8a8;border-top:1px solid #8a8a8a"></div><div class="a" style="left:1160px;top:662px;width:215px;height:16px;background:#c6c6c6;border-top:1px solid #eee;border-left:1px solid #eee;border-right:1px solid #7a7a7a;border-bottom:1px solid #7a7a7a"></div><svg class="a" style="left:1143px;top:661px" width="17" height="17"><polygon points="1.5,8.5 15.0,1.5 15.0,15.5" fill="#c0c0c0"/><path d="M1.5 8.5 L15.0 1.5" stroke="#f4f4f4" stroke-dasharray="1.2,1.2" fill="none"/><path d="M15.0 1.5 L15.0 15.5 L1.5 8.5" stroke="#6a6a6a" stroke-dasharray="1.2,1.2" fill="none"/></svg><svg class="a" style="left:1890px;top:661px" width="17" height="17"><polygon points="1.5,15.5 1.5,1.5 15.5,8.5" fill="#c0c0c0"/><path d="M1.5 15.5 L1.5 1.5" stroke="#f4f4f4" stroke-dasharray="1.2,1.2" fill="none"/><path d="M1.5 1.5 L15.5 8.5 L1.5 15.5" stroke="#6a6a6a" stroke-dasharray="1.2,1.2" fill="none"/></svg>
<div class="a" style="left:1907px;top:337px;width:18px;height:341px;background:#a8a8a8;border-left:1px solid #747474;border-right:1px solid #e0e0e0"></div><div class="a" style="left:1907px;top:507px;width:17px;height:51px;background:#c6c6c6;border-top:1px solid #eee;border-left:1px solid #eee;border-right:1px solid #7a7a7a;border-bottom:1px solid #7a7a7a"></div><svg class="a" style="left:1907px;top:337px" width="18" height="17"><polygon points="1.0,15.0 8.5,1.5 16.0,15.0" fill="#c0c0c0"/><path d="M1.0 15.0 L8.5 1.5" stroke="#f4f4f4" stroke-dasharray="1.2,1.2" fill="none"/><path d="M8.5 1.5 L16.0 15.0 L1.0 15.0" stroke="#6a6a6a" stroke-dasharray="1.2,1.2" fill="none"/></svg><svg class="a" style="left:1907px;top:661px" width="18" height="17"><polygon points="8.5,15.5 1.0,2.0 16.0,2.0" fill="#c0c0c0"/><path d="M8.5 15.5 L1.0 2.0" stroke="#f4f4f4" stroke-dasharray="1.2,1.2" fill="none"/><path d="M1.0 2.0 L16.0 2.0 L8.5 15.5" stroke="#6a6a6a" stroke-dasharray="1.2,1.2" fill="none"/></svg>
<div class="a" style="left:1143px;top:678px;width:764px;height:171px;background:#fff;overflow:hidden"><div class="a mono" style="left:0;top:1px;width:764px;height:17px;background:#f0f0f0;font-size:13px;letter-spacing:0.173px;line-height:17px;white-space:pre;overflow:hidden"> P  R  K  K  F  F  P  A  I  N  R  L  F  C  R  I  I  H  N  P  H  P  V  K  N  F  F  N  T  M  W  I</div><div class="a mono" style="left:0;top:20px;width:764px;height:17px;background:#f0f0f0;font-size:13px;letter-spacing:0.173px;line-height:17px;white-space:pre;overflow:hidden">  R  G  K  N  F  S  R  Q  S  T  G  F  F  A  G  L  S  T  I  H  T  L  S  K  T  F  S  T  P  C  G  Y</div><div class="a mono" style="left:0;top:39px;width:764px;height:19px;background:#f0f0f0;font-size:13px;letter-spacing:0.173px;line-height:17px;white-space:pre;overflow:hidden">.  .  .  P  R  K  K  F  F  P  A  I  N  R  L  F  C  R  I  I  H  N  P  H  P  V  K  N  F  F  N  T</div><div class="a mono" style="left:0;top:58px;width:764px;height:17px;background:#c8c8c8;font-size:13px;letter-spacing:0.173px;line-height:17px;white-space:pre;overflow:hidden">CCGCGGAAAAAATTTTTCCCGGCAATCAACAGGCTTTTTTGCAGGATTATCCACAATCCACACCCTGTCAAAAACTTTTTCAACACCATGTGGATA</div><div class="a mono" style="left:0;top:96px;width:764px;height:17px;background:#c8c8c8;font-size:13px;letter-spacing:0.173px;line-height:17px;white-space:pre;overflow:hidden">GGCGCCTTTTTTAAAAAGGGCCGTTAGTTGTCCGAAAAAACGTCCTAATAGGTGTTAGGTGTGGGACAGTTTTTGAAAAAGTTGTGGTACACCTAT</div><div class="a mono" style="left:0;top:116px;width:764px;height:17px;background:#f0f0f0;font-size:13px;letter-spacing:0.173px;line-height:15px;white-space:pre;overflow:hidden">G  R  F  F  N  K  G  A  I  L  L  S  K  Q  L  I  I  W  L  G  C  G  T  L  F  K  K  L  V  M  H  I</div><div class="a mono" style="left:0;top:135px;width:764px;height:17px;background:#f0f0f0;font-size:13px;letter-spacing:0.173px;line-height:15px;white-space:pre;overflow:hidden">  A  S  F  I  K  G  P  L  *  C  A  K  K  C  S  #  G  C  D  V  G  Q  *  F  S  K  *  C  W  T  S  I</div><div class="a mono" style="left:0;top:154px;width:764px;height:17px;background:#f0f0f0;font-size:13px;letter-spacing:0.173px;line-height:15px;white-space:pre;overflow:hidden"> R  P  F  F  K  E  R  C  D  V  P  K  K  A  P  N  D  V  I  W  V  R  D  F  V  K  E  V  G  H  P  Y</div><div class="a" style="left:0;top:113px;width:764px;height:3px;background:#f0f0f0"></div><svg class="a" style="left:0;top:75px" width="764" height="21" shape-rendering="crispEdges"><path d="M72.5 21 V1.5 H80.0" fill="none" stroke="#000"/><path d="M152.5 21 V1.5 H160.0" fill="none" stroke="#000"/><path d="M232.5 21 V1.5 H240.0" fill="none" stroke="#000"/><path d="M312.5 21 V1.5 H320.0" fill="none" stroke="#000"/><path d="M392.5 21 V1.5 H400.0" fill="none" stroke="#000"/><path d="M472.5 21 V1.5 H480.0" fill="none" stroke="#000"/><path d="M552.5 21 V1.5 H560.0" fill="none" stroke="#000"/><path d="M632.5 21 V1.5 H640.0" fill="none" stroke="#000"/><path d="M712.5 21 V1.5 H720.0" fill="none" stroke="#000"/></svg><div class="a mono" style="left:74px;top:78px;font-size:13px;letter-spacing:0.173px;line-height:17px">10</div><div class="a mono" style="left:154px;top:78px;font-size:13px;letter-spacing:0.173px;line-height:17px">20</div><div class="a mono" style="left:234px;top:78px;font-size:13px;letter-spacing:0.173px;line-height:17px">30</div><div class="a mono" style="left:314px;top:78px;font-size:13px;letter-spacing:0.173px;line-height:17px">40</div><div class="a mono" style="left:394px;top:78px;font-size:13px;letter-spacing:0.173px;line-height:17px">50</div><div class="a mono" style="left:474px;top:78px;font-size:13px;letter-spacing:0.173px;line-height:17px">60</div><div class="a mono" style="left:554px;top:78px;font-size:13px;letter-spacing:0.173px;line-height:17px">70</div><div class="a mono" style="left:634px;top:78px;font-size:13px;letter-spacing:0.173px;line-height:17px">80</div><div class="a mono" style="left:714px;top:78px;font-size:13px;letter-spacing:0.173px;line-height:17px">90</div></div>
<div class="a" style="left:1143px;top:849px;width:764px;height:17px;background:#a8a8a8;border-top:1px solid #8a8a8a"></div><div class="a" style="left:1160px;top:850px;width:6px;height:16px;background:#c6c6c6;border-top:1px solid #eee;border-left:1px solid #eee;border-right:1px solid #7a7a7a;border-bottom:1px solid #7a7a7a"></div><svg class="a" style="left:1143px;top:849px" width="17" height="17"><polygon points="1.5,8.5 15.0,1.5 15.0,15.5" fill="#c0c0c0"/><path d="M1.5 8.5 L15.0 1.5" stroke="#f4f4f4" stroke-dasharray="1.2,1.2" fill="none"/><path d="M15.0 1.5 L15.0 15.5 L1.5 8.5" stroke="#6a6a6a" stroke-dasharray="1.2,1.2" fill="none"/></svg><svg class="a" style="left:1890px;top:849px" width="17" height="17"><polygon points="1.5,15.5 1.5,1.5 15.5,8.5" fill="#c0c0c0"/><path d="M1.5 15.5 L1.5 1.5" stroke="#f4f4f4" stroke-dasharray="1.2,1.2" fill="none"/><path d="M1.5 1.5 L15.5 8.5 L1.5 15.5" stroke="#6a6a6a" stroke-dasharray="1.2,1.2" fill="none"/></svg>
<div class="a" style="left:1907px;top:678px;width:18px;height:188px;background:#a8a8a8;border-left:1px solid #747474;border-right:1px solid #e0e0e0"></div><div class="a" style="left:1907px;top:696px;width:17px;height:25px;background:#c6c6c6;border-top:1px solid #eee;border-left:1px solid #eee;border-right:1px solid #7a7a7a;border-bottom:1px solid #7a7a7a"></div><svg class="a" style="left:1907px;top:678px" width="18" height="17"><polygon points="1.0,15.0 8.5,1.5 16.0,15.0" fill="#c0c0c0"/><path d="M1.0 15.0 L8.5 1.5" stroke="#f4f4f4" stroke-dasharray="1.2,1.2" fill="none"/><path d="M8.5 1.5 L16.0 15.0 L1.0 15.0" stroke="#6a6a6a" stroke-dasharray="1.2,1.2" fill="none"/></svg><svg class="a" style="left:1907px;top:849px" width="18" height="17"><polygon points="8.5,15.5 1.0,2.0 16.0,2.0" fill="#c0c0c0"/><path d="M8.5 15.5 L1.0 2.0" stroke="#f4f4f4" stroke-dasharray="1.2,1.2" fill="none"/><path d="M1.0 2.0 L16.0 2.0 L8.5 15.5" stroke="#6a6a6a" stroke-dasharray="1.2,1.2" fill="none"/></svg>
<div class="a" style="left:1143px;top:866px;width:764px;height:110px;background:#f0f0f0;overflow:hidden"><div class="a" style="left:1px;top:2px;width:17px;height:16px;background:#a8a8a8"></div><div class="a mono" style="left:21px;top:1px;width:743px;height:17px;padding-left:1px;font-size:13px;letter-spacing:0.173px;line-height:19px;white-space:pre;overflow:hidden;">RBS                 303     316</div><div class="a" style="left:1px;top:19px;width:17px;height:16px;background:#a8a8a8"></div><div class="a mono" style="left:21px;top:18px;width:743px;height:17px;padding-left:1px;font-size:13px;letter-spacing:0.173px;line-height:19px;white-space:pre;overflow:hidden;">RBS                 306     319</div><div class="a" style="left:1px;top:36px;width:17px;height:16px;background:#a8a8a8"></div><div class="a mono" style="left:21px;top:35px;width:743px;height:17px;padding-left:1px;font-size:13px;letter-spacing:0.173px;line-height:19px;white-space:pre;overflow:hidden;">RBS                 307     320</div><div class="a" style="left:1px;top:53px;width:17px;height:16px;background:#00c850"></div><div class="a mono" style="left:21px;top:52px;width:743px;height:17px;padding-left:1px;font-size:13px;letter-spacing:0.173px;line-height:19px;white-space:pre;overflow:hidden; background:#000;color:#fff;">CDS                 323    1687</div><div class="a" style="left:1px;top:70px;width:17px;height:16px;background:#a8a8a8"></div><div class="a mono" style="left:21px;top:69px;width:743px;height:17px;padding-left:1px;font-size:13px;letter-spacing:0.173px;line-height:19px;white-space:pre;overflow:hidden;">terminator          574     616 c</div><div class="a" style="left:1px;top:87px;width:17px;height:16px;background:#a8a8a8"></div><div class="a mono" style="left:21px;top:86px;width:743px;height:17px;padding-left:1px;font-size:13px;letter-spacing:0.173px;line-height:19px;white-space:pre;overflow:hidden;">RBS                1852    1865</div><div class="a" style="left:1px;top:104px;width:17px;height:16px;background:#00c850"></div><div class="a mono" style="left:21px;top:103px;width:743px;height:17px;padding-left:1px;font-size:13px;letter-spacing:0.173px;line-height:19px;white-space:pre;overflow:hidden;">CDS                1868    3005</div></div>
<div class="a" style="left:1907px;top:867px;width:18px;height:109px;background:#a8a8a8;border-left:1px solid #747474;border-right:1px solid #e0e0e0"></div><div class="a" style="left:1907px;top:884px;width:17px;height:6px;background:#c6c6c6;border-top:1px solid #eee;border-left:1px solid #eee;border-right:1px solid #7a7a7a;border-bottom:1px solid #7a7a7a"></div><svg class="a" style="left:1907px;top:867px" width="18" height="17"><polygon points="1.0,15.0 8.5,1.5 16.0,15.0" fill="#c0c0c0"/><path d="M1.0 15.0 L8.5 1.5" stroke="#f4f4f4" stroke-dasharray="1.2,1.2" fill="none"/><path d="M8.5 1.5 L16.0 15.0 L1.0 15.0" stroke="#6a6a6a" stroke-dasharray="1.2,1.2" fill="none"/></svg><svg class="a" style="left:1907px;top:959px" width="18" height="17"><polygon points="8.5,15.5 1.0,2.0 16.0,2.0" fill="#c0c0c0"/><path d="M8.5 15.5 L1.0 2.0" stroke="#f4f4f4" stroke-dasharray="1.2,1.2" fill="none"/><path d="M1.0 2.0 L16.0 2.0 L8.5 15.5" stroke="#6a6a6a" stroke-dasharray="1.2,1.2" fill="none"/></svg>
<div class="a" style="left:1139px;top:976px;width:791px;height:3px;background:#e4e4e4;border-top:1px solid #8a8a8a"></div>
<div class="a" style="left:1138px;top:960px;width:4px;height:20px;background:#5c70b8"></div>
<div class="a" style="left:1138px;top:977px;width:22px;height:3px;background:#5c70b8"></div>
<div class="a" style="left:1927px;top:960px;width:4px;height:20px;background:#5c70b8"></div>
<div class="a" style="left:1909px;top:977px;width:22px;height:3px;background:#5c70b8"></div>
</div>
</div></body></html>
